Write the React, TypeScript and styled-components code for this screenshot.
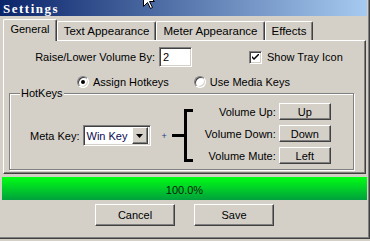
import React from "react";
import styled, { createGlobalStyle } from "styled-components";

const GlobalStyle = createGlobalStyle`
  html, body {
    margin: 0;
    padding: 0;
    background: #d4d0c8;
  }
  body {
    font-family: "Liberation Sans", Arial, sans-serif;
    font-size: 11px;
    color: #000;
  }
  #root {
    width: 370px;
    height: 241px;
    overflow: hidden;
  }
`;

const Window = styled.div`
  position: relative;
  box-sizing: border-box;
  width: 370px;
  height: 239px;
  display: flex;
  flex-direction: column;
  padding-right: 2px;
  background: #d4d0c8;
  border-right: 1px solid #404040;
  border-bottom: 1px solid #404040;
  box-shadow: inset -1px -1px #808080;
`;

const TitleBar = styled.div`
  height: 16px;
  padding-left: 3px;
  flex-shrink: 0;
  background: linear-gradient(to right, #0a246a, #a6caf0);
  color: #fff;
  font-family: "Liberation Serif", "Times New Roman", serif;
  font-weight: bold;
  font-size: 13px;
  letter-spacing: 1.5px;
  line-height: 17px;
`;

const Cursor = styled.svg`
  position: absolute;
  left: 143px;
  top: -10px;
`;

const TabStrip = styled.div`
  display: flex;
  align-items: flex-end;
  height: 24px;
  padding-left: 3px;
  flex-shrink: 0;
`;

const Tab = styled.div<{ $active?: boolean; $width: number }>`
  position: relative;
  z-index: ${(p) => (p.$active ? 1 : 0)};
  box-sizing: border-box;
  width: ${(p) => p.$width}px;
  height: ${(p) => (p.$active ? 22 : 19)}px;
  margin-bottom: ${(p) => (p.$active ? -1 : 0)}px;
  padding-top: 3px;
  line-height: 13px;
  font-size: ${(p) => (p.$active ? 11 : 11.5)}px;
  text-align: center;
  white-space: nowrap;
  background: #d4d0c8;
  border-top: 1px solid #fff;
  border-left: 1px solid #fff;
  border-right: 1px solid #404040;
  border-radius: 2px 2px 0 0;
  box-shadow: inset -1px 0 #808080;
`;

const Panel = styled.div`
  box-sizing: border-box;
  height: 134px;
  margin: 0 1px 0 3px;
  padding-top: 6px;
  display: flex;
  flex-direction: column;
  border: 1px solid;
  border-color: #fff #404040 #404040 #fff;
  box-shadow: inset -1px -1px #808080;
  flex-shrink: 0;
`;

const Row = styled.div`
  display: flex;
  align-items: center;
`;

const FieldLabel = styled.span<{ $width?: number }>`
  width: ${(p) => (p.$width ? `${p.$width}px` : "auto")};
  text-align: right;
  white-space: nowrap;
`;

const sunken = `
  box-sizing: border-box;
  background: #fff;
  border: 1px solid;
  border-color: #808080 #fff #fff #808080;
  box-shadow: inset 1px 1px #404040, inset -1px -1px #d4d0c8;
`;

const raised = `
  box-sizing: border-box;
  background: #d4d0c8;
  border: 1px solid;
  border-color: #fff #404040 #404040 #fff;
  box-shadow: inset -1px -1px #808080;
`;

const TextBox = styled.div`
  ${sunken}
  width: 33px;
  height: 20px;
  margin-left: 4px;
  padding: 3px 0 0 3px;
  line-height: 13px;
`;

const CheckOption = styled.div`
  display: flex;
  align-items: center;
  gap: 5px;
  margin-left: 57px;
`;

const CheckBox = styled.div`
  ${sunken}
  width: 13px;
  height: 13px;
  display: flex;
  align-items: center;
  justify-content: center;
`;

const RadioRow = styled(Row)`
  margin-top: 8px;
  padding-left: 73px;
  height: 13px;
`;

const RadioOption = styled.div<{ $gap?: number }>`
  display: flex;
  align-items: center;
  gap: 4px;
  margin-right: ${(p) => p.$gap ?? 0}px;
`;

const Radio = styled.div<{ $checked?: boolean }>`
  ${sunken}
  position: relative;
  width: 12px;
  height: 12px;
  border-radius: 50%;

  &::after {
    content: "";
    display: ${(p) => (p.$checked ? "block" : "none")};
    position: absolute;
    left: 3px;
    top: 3px;
    width: 4px;
    height: 4px;
    border-radius: 50%;
    background: #000;
  }
`;

const GroupBox = styled.div`
  position: relative;
  box-sizing: border-box;
  width: 345px;
  height: 77px;
  margin: 5px 0 0 5px;
  padding: 4px 0 0 20px;
  display: flex;
  align-items: center;
  border: 1px solid #808080;
  box-shadow: inset 1px 1px #fff, 1px 1px #fff;
`;

const Legend = styled.span`
  position: absolute;
  left: 10px;
  top: -7px;
  padding: 0 1px;
  line-height: 13px;
  background: #d4d0c8;
`;

const MetaCluster = styled.div`
  display: flex;
  align-items: center;
  padding-top: 4px;
`;

const Combo = styled.div`
  ${sunken}
  display: flex;
  align-items: center;
  width: 68px;
  height: 21px;
  margin-left: 3px;
  padding: 2px;
`;

const ComboText = styled.span`
  flex: 1;
  padding-left: 1px;
  color: #0a0a50;
`;

const ComboButton = styled.div`
  ${raised}
  width: 16px;
  height: 17px;
  display: flex;
  align-items: center;
  justify-content: center;
`;

const Plus = styled.span`
  margin: 0 5px 0 11px;
  font-size: 9px;
  color: #1a3a8a;
`;

const KeyGrid = styled.div`
  display: grid;
  grid-template-columns: 76px 52px;
  grid-auto-rows: 17px;
  column-gap: 3px;
  row-gap: 5px;
  align-items: center;
  margin-left: 7px;
`;

const Button = styled.button<{ $w: number; $h: number }>`
  ${raised}
  width: ${(p) => p.$w}px;
  height: ${(p) => p.$h}px;
  padding: 0;
  font: inherit;
  color: #000;
`;

const Progress = styled.div`
  height: 23px;
  margin: 3px 0 0 2px;
  display: flex;
  align-items: center;
  justify-content: center;
  padding-top: 2px;
  box-sizing: border-box;
  background: linear-gradient(#00ff14, #00a03c);
  color: #102010;
  flex-shrink: 0;
`;

const Actions = styled.div`
  display: flex;
  gap: 19px;
  margin-top: 4px;
  padding-left: 95px;
`;

const tabs = [
  { label: "General", width: 54 },
  { label: "Text Appearance", width: 99 },
  { label: "Meter Appearance", width: 109 },
  { label: "Effects", width: 48 },
];

const keys = [
  { label: "Volume Up:", key: "Up" },
  { label: "Volume Down:", key: "Down" },
  { label: "Volume Mute:", key: "Left" },
];

const Bracket = () => (
  <svg width="21" height="53" viewBox="0 0 21 53">
    <rect x="0" y="25" width="14" height="3" fill="#000" />
    <rect x="12" y="0" width="3" height="53" fill="#000" />
    <rect x="12" y="0" width="9" height="3" fill="#000" />
    <rect x="12" y="50" width="9" height="3" fill="#000" />
  </svg>
);

export default function App() {
  return (
    <>
      <GlobalStyle />
      <Window>
        <TitleBar>Settings</TitleBar>
        <Cursor width="13" height="20" viewBox="0 0 13 20">
          <path
            d="M0.5 0.5V16.5L4.5 12.5L7.5 18.5L9.5 17.5L6.5 11.5H11.5Z"
            fill="#fff"
            stroke="#000"
            strokeWidth="1"
          />
        </Cursor>
        <TabStrip>
          {tabs.map((t, i) => (
            <Tab key={t.label} $active={i === 0} $width={t.width}>
              {t.label}
            </Tab>
          ))}
        </TabStrip>
        <Panel>
          <Row>
            <FieldLabel $width={151}>Raise/Lower Volume By:</FieldLabel>
            <TextBox>2</TextBox>
            <CheckOption>
              <CheckBox>
                <svg width="7" height="7" viewBox="0 0 7 7">
                  <path d="M0 2L0 4L2 6L7 1L7 -1L2 4Z" fill="#000" />
                </svg>
              </CheckBox>
              <span>Show Tray Icon</span>
            </CheckOption>
          </Row>
          <RadioRow>
            <RadioOption $gap={25}>
              <Radio $checked />
              <span>Assign Hotkeys</span>
            </RadioOption>
            <RadioOption>
              <Radio />
              <span>Use Media Keys</span>
            </RadioOption>
          </RadioRow>
          <GroupBox>
            <Legend>HotKeys</Legend>
            <MetaCluster>
              <FieldLabel>Meta Key:</FieldLabel>
              <Combo>
                <ComboText>Win Key</ComboText>
                <ComboButton>
                  <svg width="7" height="4" viewBox="0 0 7 4">
                    <path d="M0 0H7L3.5 4Z" fill="#000" />
                  </svg>
                </ComboButton>
              </Combo>
              <Plus>+</Plus>
              <Bracket />
            </MetaCluster>
            <KeyGrid>
              {keys.map((k) => (
                <React.Fragment key={k.key}>
                  <FieldLabel>{k.label}</FieldLabel>
                  <Button $w={52} $h={17}>
                    {k.key}
                  </Button>
                </React.Fragment>
              ))}
            </KeyGrid>
          </GroupBox>
        </Panel>
        <Progress>100.0%</Progress>
        <Actions>
          <Button $w={80} $h={22}>
            Cancel
          </Button>
          <Button $w={80} $h={22}>
            Save
          </Button>
        </Actions>
      </Window>
    </>
  );
}
